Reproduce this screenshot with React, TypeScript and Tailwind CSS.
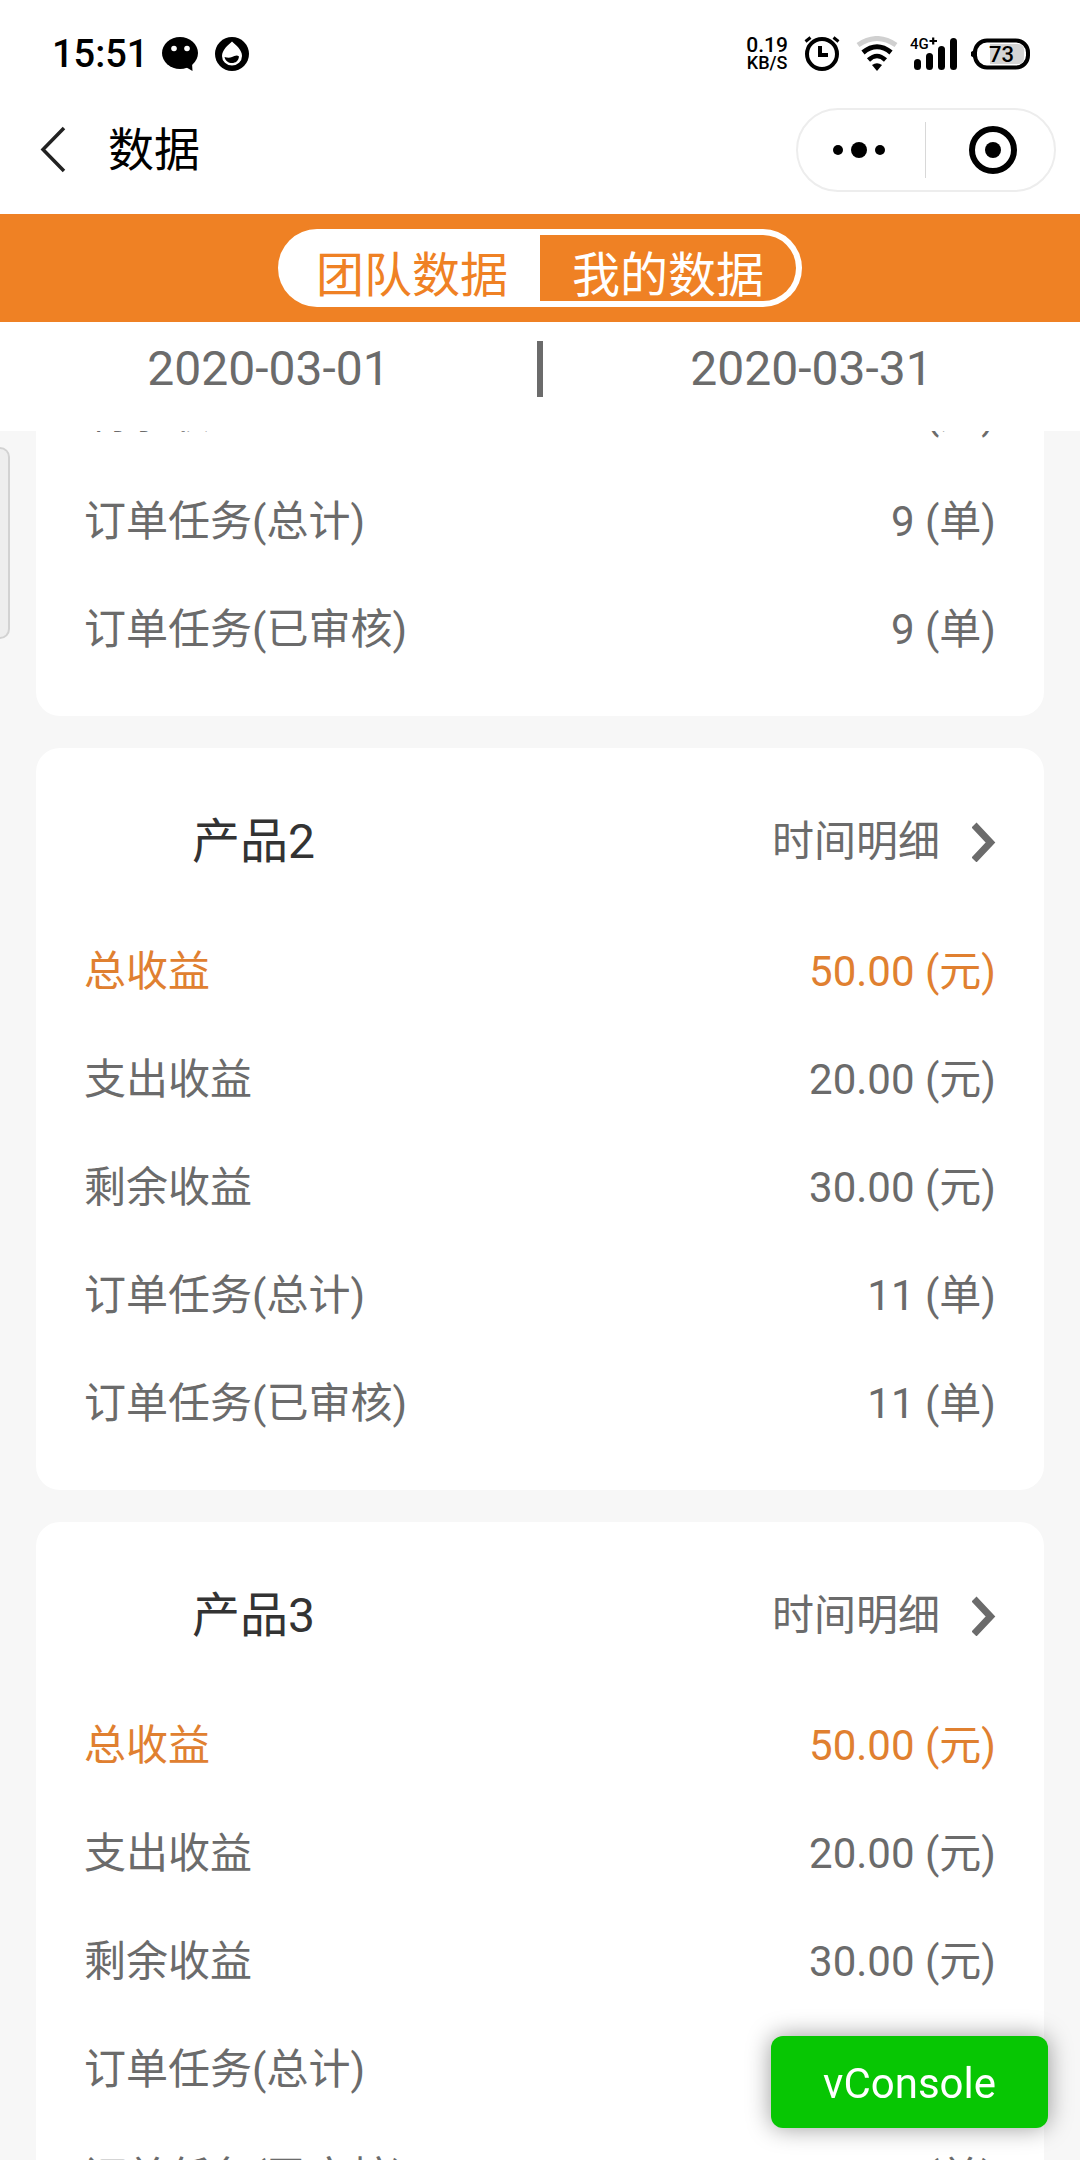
import { useLayoutEffect, useRef } from "react";

type Row = { label: string; value: string; highlight?: boolean };
type Product = { name: string; rows: Row[] };

const makeRows = (orders: number): Row[] => [
  { label: "总收益", value: "50.00 (元)", highlight: true },
  { label: "支出收益", value: "20.00 (元)" },
  { label: "剩余收益", value: "30.00 (元)" },
  { label: "订单任务(总计)", value: `${orders} (单)` },
  { label: "订单任务(已审核)", value: `${orders} (单)` },
];

const products: Product[] = [
  { name: "产品1", rows: makeRows(9) },
  { name: "产品2", rows: makeRows(11) },
  { name: "产品3", rows: makeRows(11) },
];

const INITIAL_SCROLL = 457;

function StatusBar() {
  return (
    <div className="flex h-27 items-center justify-between pr-[50px] pl-13 text-black">
      <div className="flex items-center">
        <span className="text-[38px] leading-[48px] font-medium">15:51</span>
        <svg className="ml-3.5 h-9 w-9" viewBox="0 0 36 36" aria-hidden="true">
          <ellipse cx="18" cy="17" rx="18" ry="16" />
          <path d="M22 30 L30.5 35 L30 27 Z" />
          <circle cx="12" cy="12.5" r="2.8" fill="#fff" />
          <circle cx="25" cy="12.5" r="2.8" fill="#fff" />
        </svg>
        <svg className="ml-4 h-9 w-9" viewBox="0 0 36 36" aria-hidden="true">
          <circle cx="18" cy="18" r="17" />
          <path d="M18 5.5 C14 9 8 14 8 20 a10 9.5 0 0 0 20 0 C28 14 22 9 18 5.5 Z" fill="#fff" />
          <path d="M10.5 21 c3 .8 5 1 7.5 0 c2.5 -1 5 -2.5 7 -.5 c-.5 4.5 -3.5 6.5 -7 6.5 c-3.5 0 -6.5 -2 -7.5 -6 Z" />
        </svg>
      </div>
      <div className="flex items-center">
        <div className="flex flex-col items-center font-medium">
          <span className="text-[21px] leading-[18px]">0.19</span>
          <span className="text-[18px] leading-[18px]">KB/S</span>
        </div>
        <svg className="ml-4 h-9 w-9" viewBox="0 0 36 36" fill="none" stroke="#000" aria-hidden="true">
          <circle cx="18" cy="18" r="15" strokeWidth="4" />
          <path d="M16 10 V19 H24" strokeWidth="4" />
          <path d="M1.5 5.5 L6.5 1.5 M29.5 1.5 L34.5 5.5" strokeWidth="3" />
        </svg>
        <svg className="ml-4 h-9 w-10.5" viewBox="0 0 42 36" fill="none" stroke="#000" aria-hidden="true">
          <path d="M2 9 Q21 -4 40 9" stroke="#d0d0d0" strokeWidth="5" />
          <path d="M7 16.5 Q21 5 35 16.5" strokeWidth="5" />
          <path d="M12.5 24 Q21 16 29.5 24" strokeWidth="4.5" />
          <path d="M16 29 Q21 25.5 26 29 L21 35 Z" fill="#000" stroke="none" />
        </svg>
        <svg className="ml-3 h-9 w-12.5" viewBox="0 0 50 36" aria-hidden="true">
          <text x="0" y="13" fontFamily="Roboto, sans-serif" fontSize="15" fontWeight="500">
            4G
          </text>
          <path d="M19.5 5 H27 M23.2 1.5 V8.5" stroke="#000" strokeWidth="2.2" />
          <rect x="4" y="23" width="7" height="11" rx="3.5" />
          <rect x="16" y="17" width="7" height="17" rx="3.5" />
          <rect x="28" y="10" width="7" height="24" rx="3.5" />
          <rect x="40" y="2" width="7" height="32" rx="3.5" />
        </svg>
        <svg className="ml-2.5 h-9 w-15" viewBox="0 0 60 36" aria-label="73%">
          <rect x="5" y="4.5" width="53" height="27" rx="12" fill="none" stroke="#000" strokeWidth="4" />
          <path d="M20 8 H48 Q54 8 54 14 V22 Q54 28 48 28 H20 Z" fill="#d4d4d4" />
          <path d="M5 13.5 L1 16 V20 L5 22.5 Z" />
          <text x="19" y="26" fontFamily="Roboto, sans-serif" fontSize="22" fontWeight="500">
            73
          </text>
        </svg>
      </div>
    </div>
  );
}

function NavBar() {
  return (
    <header className="flex h-[106px] items-start justify-between pr-6 pl-8">
      <div className="flex h-21 items-center">
        <button type="button" aria-label="返回" className="flex h-12 w-11 items-center">
          <svg className="h-12 w-11" viewBox="0 0 44 48" fill="none" stroke="#222" strokeWidth="3.5" aria-hidden="true">
            <path d="M32 2 L11 23.5 L32 45" />
          </svg>
        </button>
        <h1 className="ml-8 text-[46px] leading-[68px] font-normal text-black">数据</h1>
      </div>
      <div className="flex h-21 w-65 items-center rounded-full border-2 border-[#ededed]">
        <button type="button" aria-label="更多" className="flex h-full flex-1 items-center justify-center gap-2 pr-1">
          <span className="h-2.5 w-2.5 rounded-full bg-black" />
          <span className="h-4 w-4 rounded-full bg-black" />
          <span className="h-2.5 w-2.5 rounded-full bg-black" />
        </button>
        <span className="h-14 w-px bg-[#d8d8d8]" />
        <button type="button" aria-label="关闭" className="flex h-full flex-1 items-center justify-center pl-1.5">
          <span className="flex h-12 w-12 items-center justify-center rounded-full border-6 border-black">
            <span className="h-4 w-4 rounded-full bg-black" />
          </span>
        </button>
      </div>
    </header>
  );
}

function ScopeTabs() {
  return (
    <div className="flex h-27 items-center justify-center bg-[#ef8124]">
      <div role="tablist" className="flex h-[78px] w-131 rounded-full bg-white p-1.5">
        <button type="button" role="tab" aria-selected="true" className="flex-1 pt-4 text-[48px] leading-[50px] text-[#ef8124]">
          团队数据
        </button>
        <button type="button" role="tab" aria-selected="false" className="flex-1 rounded-r-full bg-[#ef8124] pt-4 text-[48px] leading-[50px] text-white">
          我的数据
        </button>
      </div>
    </div>
  );
}

function DateRange() {
  return (
    <div className="flex items-center bg-white pt-[17px] pb-8 text-[48px] leading-[60px] text-[#6b6b6b]">
      <button type="button" className="flex-1">2020-03-01</button>
      <span className="h-14 w-1.5 bg-[#6b6b6b]" />
      <button type="button" className="flex-1">2020-03-31</button>
    </div>
  );
}

function ProductCard({ product }: { product: Product }) {
  return (
    <section className="rounded-3xl bg-white px-12 py-8">
      <div className="mb-3.5 flex h-31 items-center justify-between">
        <h2 className="pl-27 text-[48px] leading-[72px] font-normal text-[#333]">{product.name}</h2>
        <button type="button" className="flex items-center gap-8 text-[42px] leading-[64px] text-[#6b6b6b]">
          时间明细
          <svg className="h-10 w-6" viewBox="0 0 24 40" fill="none" stroke="#6b6b6b" strokeWidth="7" aria-hidden="true">
            <path d="M2 3 L18.5 20.5 L2 38" />
          </svg>
        </button>
      </div>
      <dl>
        {product.rows.map((row) => (
          <div
            key={row.label}
            className={
              row.highlight
                ? "flex h-27 items-center justify-between text-[42px] leading-[64px] text-[#e08030]"
                : "flex h-27 items-center justify-between text-[42px] leading-[64px] text-[#6b6b6b]"
            }
          >
            <dt>{row.label}</dt>
            <dd>{row.value}</dd>
          </div>
        ))}
      </dl>
    </section>
  );
}

export default function App() {
  const list = useRef<HTMLElement>(null);

  useLayoutEffect(() => {
    if (list.current) list.current.scrollTop = INITIAL_SCROLL;
  }, []);

  return (
    <div className="flex h-screen flex-col overflow-hidden bg-white font-['Roboto','Noto_Sans_CJK_SC',sans-serif]">
      <StatusBar />
      <NavBar />
      <ScopeTabs />
      <DateRange />
      <div className="relative min-h-0 flex-1 bg-[#f7f7f7]">
        <main ref={list} className="flex h-full flex-col gap-8 overflow-y-auto px-9 [scrollbar-width:none]">
          {products.map((product) => (
            <ProductCard key={product.name} product={product} />
          ))}
        </main>
        <div className="absolute top-4 left-0 h-48 w-2.5 rounded-r-xl border-2 border-l-0 border-[#d2d2d2] bg-[#eeeeee]" />
      </div>
      <button
        type="button"
        className="fixed right-8 bottom-8 rounded-xl bg-[#07c603] px-[52px] pt-[18px] pb-[14px] text-[42px] leading-[60px] text-white shadow-[0_0_24px_rgba(0,0,0,0.4)]"
      >
        vConsole
      </button>
    </div>
  );
}
